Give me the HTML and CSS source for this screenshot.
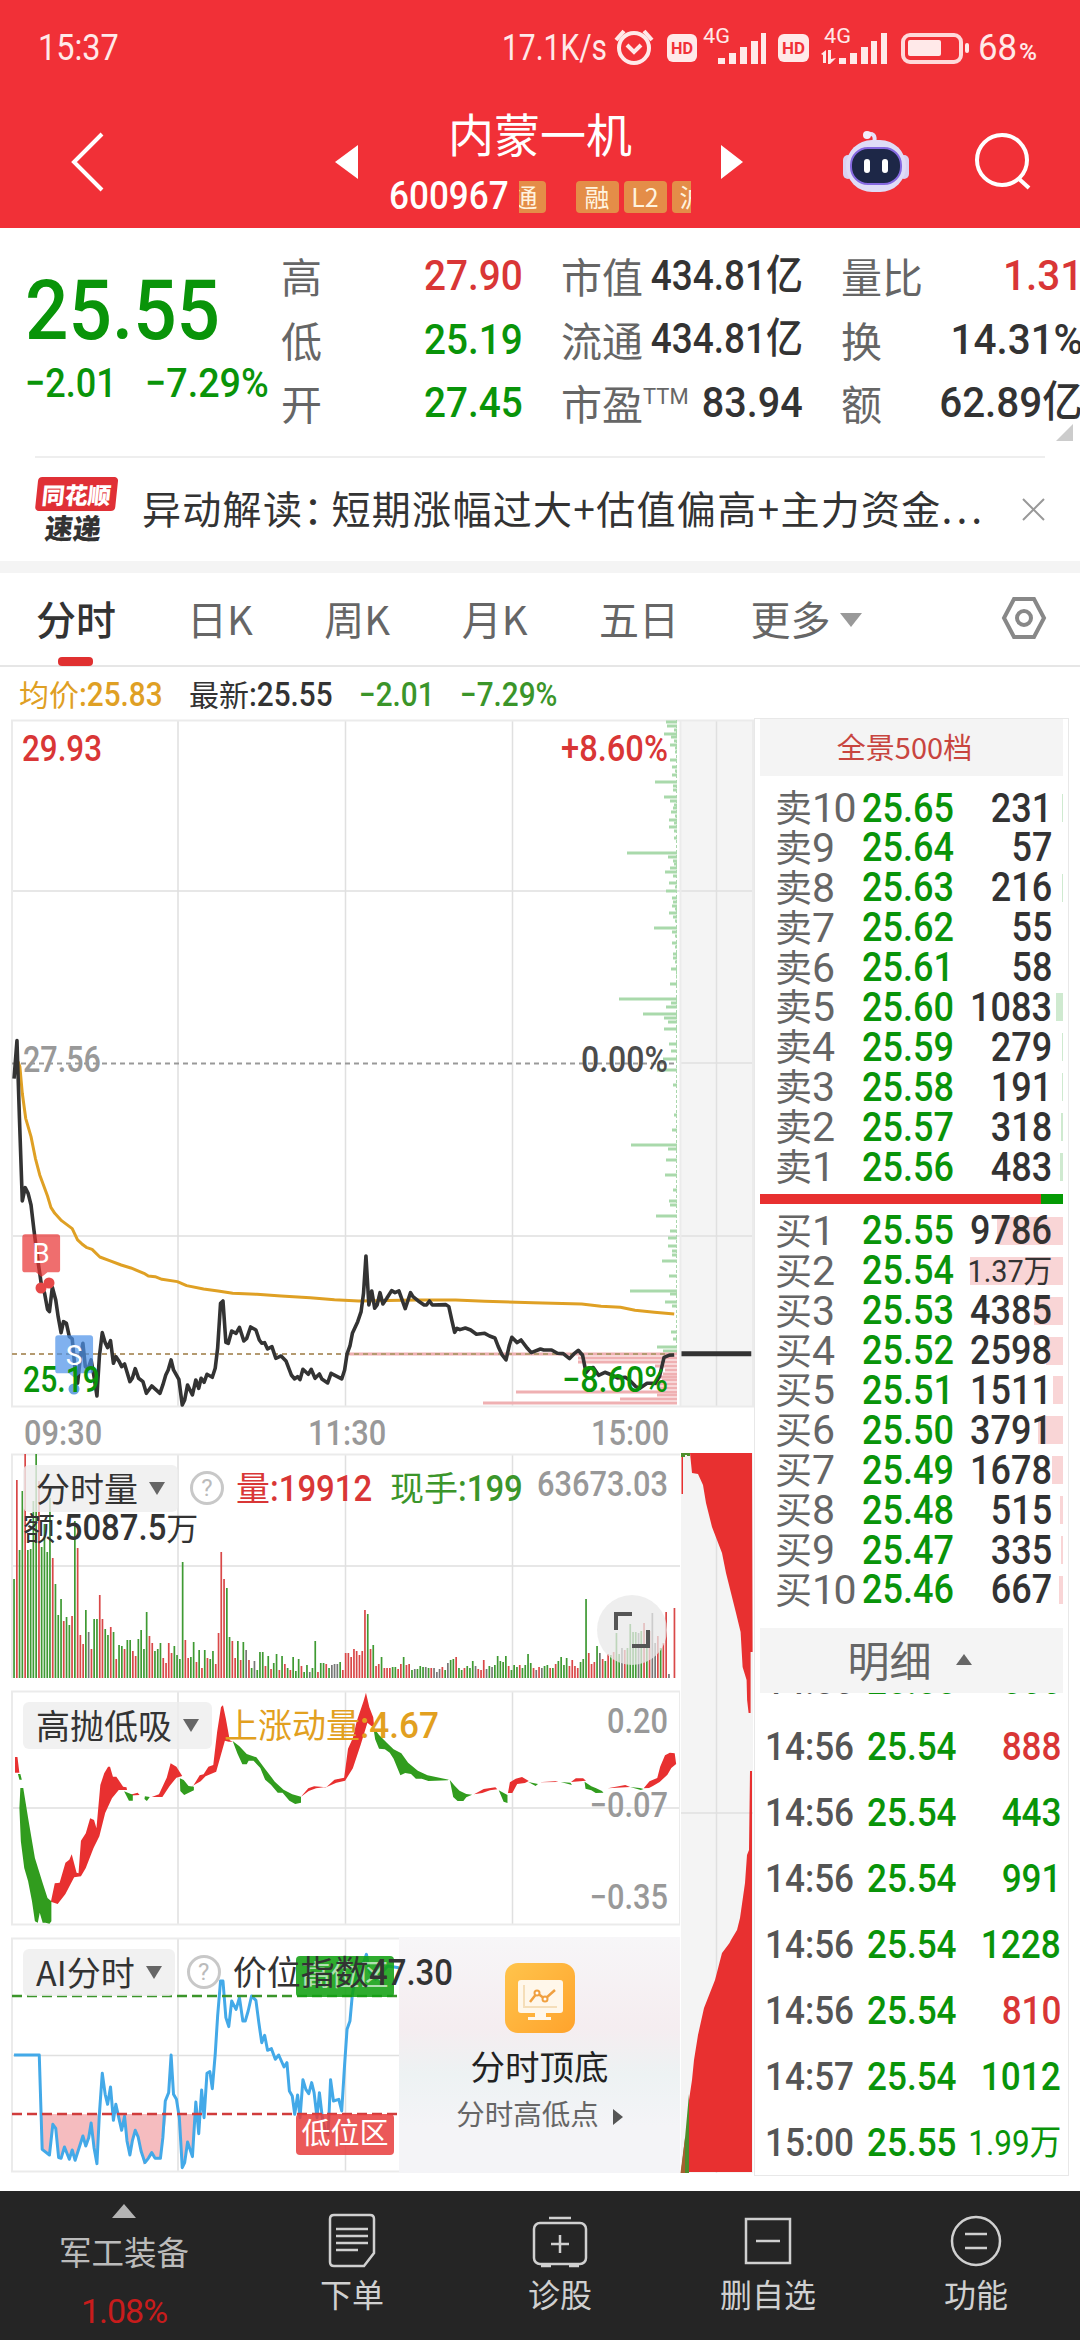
FILE: index.html
```html
<!DOCTYPE html>
<html lang="zh-CN">
<head>
    <meta charset="UTF-8">
    <meta name="viewport" content="width=device-width, initial-scale=1.0">
    <title>内蒙一机 600967</title>
    <link rel="stylesheet" href="styles.css">
</head>
<body>
    <div class="status-bar">
        <span class="num">15:37</span>
        <svg class="status-icons" width="580" height="60" viewBox="0 0 580 60">
            <text x="2" y="42" font-size="36" textLength="105" lengthAdjust="spacingAndGlyphs">17.1K/s</text>
            <g fill="none" stroke="#ffe9e9" stroke-width="4">
                <circle cx="134" cy="30" r="15"/>
                <path d="M116 22l8-9M152 22l-8-9M127 27l7 7 7-7"/>
            </g>
            <rect x="167" y="16" width="30" height="28" rx="6"/>
            <text class="hd" x="171" y="36" font-size="17" textLength="22" lengthAdjust="spacingAndGlyphs">HD</text>
            <text x="203" y="25" font-size="20" textLength="27" lengthAdjust="spacingAndGlyphs">4G</text>
            <path d="M218 46v-6h7v6zM229 46V35h7v11zM240 46V29h7v17zM251 46V23h7v23zM261 46V15h5v31z"/>
            <rect x="278" y="16" width="31" height="28" rx="6"/>
            <text class="hd" x="282" y="36" font-size="17" textLength="23" lengthAdjust="spacingAndGlyphs">HD</text>
            <text x="324" y="25" font-size="20" textLength="27" lengthAdjust="spacingAndGlyphs">4G</text>
            <path d="M321 36l5-4v13h-3v-8zM328 32h3v9l5-1-6 6h-2zM339 46v-6h7v6zM350 46V35h7v11zM361 46V29h7v17zM371 46V23h6v23zM381 46V15h6v31z"/>
            <rect x="403" y="17" width="58" height="27" rx="7" fill="none" stroke="#ffd9da" stroke-width="4"/>
            <rect x="408" y="22" width="33" height="16" rx="2"/>
            <rect x="465" y="25" width="4" height="10" rx="2"/>
            <text x="478" y="42" font-size="36" textLength="39" lengthAdjust="spacingAndGlyphs">68</text>
            <text x="519" y="42" font-size="23" font-weight="500" textLength="18" lengthAdjust="spacingAndGlyphs">%</text>
        </svg>
    </div>

    <div class="title-bar">
        <svg class="back" width="40" height="66" viewBox="0 0 40 66"><path d="M34 5L6 33l28 28"/></svg>
        <svg class="prev" width="24" height="34" viewBox="0 0 24 34"><path d="M23 0v34L0 17z"/></svg>
        <div class="stock">
            <h1>内蒙一机</h1>
            <div class="code">
                <span class="num">600967</span>
                <span class="tag cut-left">通</span>
                <span class="tag">融</span>
                <span class="tag">L2</span>
                <span class="tag cut-right">沪</span>
            </div>
        </div>
        <svg class="next" width="24" height="34" viewBox="0 0 24 34"><path d="M0 0v34l22-17z"/></svg>
        <svg class="robot" width="68" height="66" viewBox="0 0 68 66">
            <path d="M32 14c2-8-1-10-7-9" fill="none" stroke="#e6e0fa" stroke-width="4" stroke-linecap="round"/>
            <circle cx="25" cy="6" r="4" fill="#f3eefc"/>
            <rect x="1" y="26" width="10" height="24" rx="5" fill="#d9d2f2"/>
            <rect x="57" y="26" width="10" height="24" rx="5" fill="#d9d2f2"/>
            <rect x="4" y="11" width="60" height="52" rx="26" fill="#dfdcf7"/>
            <rect x="9" y="19" width="50" height="36" rx="17" fill="#1d2747" stroke="#8569e0" stroke-width="2"/>
            <rect x="22" y="30" width="6" height="14" rx="3" fill="#fff"/>
            <rect x="40" y="30" width="6" height="14" rx="3" fill="#fff"/>
        </svg>
        <svg class="search" width="60" height="60" viewBox="0 0 60 60"><circle cx="28" cy="28" r="25"/><path d="M44 46l11 10"/></svg>
    </div>

    <div class="quote">
        <div class="price">
            <b class="num">25.55</b>
            <p><span class="num">−2.01</span><span class="num pct">−7.29%</span></p>
        </div>
        <dl class="q1">
            <dt>高</dt><dd class="num up">27.90</dd>
            <dt>低</dt><dd class="num down">25.19</dd>
            <dt>开</dt><dd class="num down">27.45</dd>
        </dl>
        <dl class="q2">
            <dt>市值</dt><dd class="num">434.81亿</dd>
            <dt>流通</dt><dd class="num">434.81亿</dd>
            <dt>市盈<sup>TTM</sup></dt><dd class="num pe">83.94</dd>
        </dl>
        <dl class="q3">
            <dt>量比</dt><dd class="num up">1.31</dd>
            <dt>换</dt><dd class="num">14.31%</dd>
            <dt>额</dt><dd class="num">62.89亿</dd>
        </dl>
        <i class="corner"></i>
    </div>

    <div class="news">
        <div class="logo"><b>同花顺</b><i>速递</i></div>
        <span class="headline">异动解读<i>：</i>短期涨幅过大+估值偏高+主力资金<em>...</em></span>
        <svg width="24" height="24" viewBox="0 0 24 24"><path d="M1 1l21 21M22 1L1 22"/></svg>
    </div>

    <div class="tabs">
        <a class="active">分时</a>
        <a>日K</a>
        <a>周K</a>
        <a>月K</a>
        <a>五日</a>
        <a>更多<i class="caret"></i></a>
        <svg width="46" height="46" viewBox="0 0 46 46"><path d="M13 4h20l10 19-10 19H13L3 23z"/><circle cx="23" cy="23" r="7"/></svg>
    </div>

    <div class="main">
        <div class="left">
            <div class="legend">
                <span class="avg">均价<span class="num">:25.83</span></span>
                <span>最新<span class="num">:25.55</span></span>
                <span class="num down2">−2.01</span>
                <span class="num down2">−7.29%</span>
            </div>

            <svg class="chart" id="minute" width="754" height="690" viewBox="0 719 754 690">
                <rect x="680" y="720" width="73" height="687" fill="#f4f4f4"/>
                <g class="grid">
                    <path d="M178 720v687M345.500 720v687M512.500 720v687M716.500 720v687M12 891h740M680 1063h72M12 1236h740"/>
                    <path class="frame" d="M12 720.500h741v686H12zM680.500 720v687"/>
                </g>
                <path class="zero" d="M12 1063.500h665"/>
                <g id="depth"></g>
                <path class="last" d="M12 1354h665"/>
                <g transform="translate(0 1000) scale(.4847 .3333)">
                    <polyline class="avg-line" points="37,185 41,200 46,280 53,355 64,410 73,475 82,525 98,588 105,622 113,640 127,662 149,686 160,720 169,732 178,742 190,748 206,771 226,782 250,795 270,804 297,820 306,828 320,830 334,838 366,845 385,857 420,867 450,873 480,880 530,883 580,888 640,893 690,899 740,903 860,900 940,900 1000,904 1100,908 1200,912 1240,919 1280,922 1310,931 1350,937 1391,942"/>
                    <polyline class="price-line" points="29,236 35,122 40,350 46,603 52,563 58,580 64,615 70,690 74,735 80,800 86,860 92,880 98,928 102,935 108,862 115,900 120,950 126,998 131,965 137,970 143,1010 149,1017 155,1110 160,1150 166,1070 171,1030 176,1100 182,1105 188,1080 194,1130 200,1188 205,1070 211,998 217,1028 222,1043 228,1022 234,1090 239,1070 246,1085 251,1100 257,1092 268,1145 273,1135 279,1106 286,1135 295,1145 302,1180 313,1158 330,1180 336,1155 342,1125 347,1110 353,1080 358,1110 369,1138 376,1215 381,1200 387,1155 397,1185 404,1140 410,1165 415,1135 421,1147 427,1123 438,1132 444,1105 449,1045 455,910 460,903 466,1027 471,1030 478,993 487,1000 494,982 503,1023 509,1015 517,981 528,990 535,1020 540,1030 546,1028 552,1047 561,1040 569,1075 580,1068 590,1083 601,1125 608,1137 614,1130 619,1139 625,1108 636,1123 642,1108 650,1135 659,1122 664,1137 676,1149 683,1120 705,1137 711,1110 716,1062 722,1038 727,1000 738,965 745,935 750,880 755,768 761,915 767,873 773,925 778,915 784,878 790,912 798,895 808,872 815,878 823,873 836,926 847,878 852,890 863,903 875,915 880,915 886,903 892,915 920,914 926,920 932,960 938,997 943,985 949,989 960,984 971,990 983,1003 1000,1000 1010,1008 1021,1014 1028,1040 1036,1065 1044,1080 1051,1035 1056,1012 1067,1028 1075,1020 1088,1045 1096,1058 1115,1047 1122,1050 1138,1050 1150,1060 1162,1061 1175,1076 1184,1062 1193,1051 1202,1066 1209,1118 1216,1105 1224,1103 1235,1126 1248,1117 1262,1125 1274,1134 1290,1132 1300,1142 1311,1159 1320,1165 1335,1150 1352,1150 1361,1128 1370,1072 1380,1066 1391,1065"/>
                    <path d="M46 712q0-9 6-9h66q6 0 6 9v98q0 7-6 7H98l-12 14-12-14H52q-6 0-6-7z" fill="#e83030" opacity=".7"/>
                    <path d="M114 1015q0-9 6-9h66q6 0 6 9v98q0 7-6 7h-20l-12 14-12-14h-22q-6 0-6-7z" fill="#4a90e8" opacity=".7"/>
                    <path class="axis-end" d="M1406 1061h144"/>
                </g>
                <circle cx="41" cy="1288" r="5.500" fill="#e64848"/><circle cx="49" cy="1283" r="5.500" fill="#e64848"/>
                <circle cx="74" cy="1389" r="5.500" fill="#6ba5e2"/>
                <text class="mark" x="41" y="1263" text-anchor="middle">B</text>
                <text class="mark" x="74" y="1365" text-anchor="middle">S</text>
                <text x="22" y="761" textLength="80" lengthAdjust="spacingAndGlyphs" class="up">29.93</text>
                <text x="561" y="761" textLength="107" lengthAdjust="spacingAndGlyphs" class="up">+8.60%</text>
                <text x="23" y="1072" textLength="78" lengthAdjust="spacingAndGlyphs" class="muted">27.56</text>
                <text x="581" y="1072" textLength="87" lengthAdjust="spacingAndGlyphs" class="dark">0.00%</text>
                <text x="23" y="1392" textLength="77" lengthAdjust="spacingAndGlyphs" class="down">25.19</text>
                <text x="562" y="1392" textLength="106" lengthAdjust="spacingAndGlyphs" class="down">−8.60%</text>
            </svg>

            <div class="times">
                <span class="num">09:30</span><span class="num">11:30</span><span class="num">15:00</span>
            </div>

            <div class="lower">
                <div class="panels">
                    <div class="panel" id="volume">
                        <svg width="680" height="226" viewBox="0 1453 680 226">
                            <path class="grid" d="M178 1454v224M345.500 1454v224M512.500 1454v224M12 1566h668"/>
                            <path class="grid frame" d="M12 1678V1454.500h668"/>
                            <g id="bars"></g>
                        </svg>
                        <div class="expand"><svg width="36" height="36" viewBox="0 0 36 36"><path d="M2 18V2h16M34 18v16H18"/></svg></div>
                        <div class="labels">
                            <span class="chip">分时量<i class="caret"></i></span>
                            <span class="help">?</span>
                            <span class="up vol">量<span class="num">:19912</span></span>
                            <span class="down2">现手<span class="num">:199</span></span>
                        </div>
                        <div class="amount">额<span class="num">:5087.5</span>万</div>
                        <div class="scale"><span class="num">63673.03</span></div>
                    </div>

                    <div class="panel" id="momentum">
                        <svg width="680" height="236" viewBox="0 1689 680 236">
                            <path class="grid" d="M178 1690v234M345.500 1690v234M512.500 1690v234M12 1807h668"/>
                            <path class="grid frame" d="M12 1690.500h668v233H12z"/>
                            <g transform="translate(0 1680) scale(.4847 .3333)" fill="#e83030">
                                <path d="M31 228h5l4 47h-9zM105 662l8-55 10-2 12-60 8-9 5-16 10 55 4 2 5-98 10-22 9-45 8 5 5 25 8-130 8-35 8-20 4 0 6 30 7 0 14 30 7 2 1 8-17 0-14 25-14 44-12 70-12 35-16 60-10 25-14 3-18 50-16 30zM261 344l23-9 4 7zM313 348l15-8 16-50 8-43 12 10 12 28-12 5-14 25-15 33zM397 318l15-35 8-3 10-23 10-5 8-100 8-74 4-5 6 40 8 65 6 4-8 0-8-3-9 47-9 46-22 14-10 15-17 14zM621 347l15-25 12-6 25 3 17-23 20-6 8-87 10-32 8-50 14-60 5-26 7 44 8 30 2 28-6-2-8-10-14 67-16 70-16 37-18 6-19 12-23 5-15 8zM978 340l20-16 24-5 4 6-15 3-16 8zM1048 336l4-32 12-11 13-5 14 12-8 6-16 3-10 27zM1111 304l41-4-6 3zM1178 303l10-11 15 0 6 7zM1254 322l36-10 10 6zM1328 322l12-21 16-10 6-34 10-34 10-8 10 2 3 32-10 12-8 20-16 22-14 12-8 6z"/>
                                <path fill="#319c1e" d="M37 279h5l3 17h-5zM42 321h6l10 90 14 120 16 75 10 45 8 10v60l-4 7-8-3-6 0-6-30-4 30-6-4-6-60-8-60-8-40-7-80-3-100zM256 331l18 10v18h-8zM299 346l10 2-6 12-5-6zM371 292l8 5 10 18 11 2v11l-20 14-8-12zM480 180l14 16 15 23 20 10 18 35 20 38 18 24 18 14 18 7v18l-12 4-12-10-14-24-10 0-14-24-12-15-10-35-14-22-10 0-4 11-9 0-10-32zM770 137l12 25 16 23 14 20 16 12 14 28 20 24 20 14 44 13-2 2-40 2-14-7-12 0-10-14-12-3-10 7-14-50-8-18-10-10-12-2-8-28zM928 297l10 17 10 15 14 10 12 2-12 8-6 11-12 0-9-12zM1029 328l18 14v24l-8-4zM1090 303l20 6-5 6zM1157 303l20 2 3 7zM1206 302l14 14 10 6 12 8 3 5-16 1-9-8-12-5zM1300 318l20 3 8 3-6 3z"/>
                            </g>
                        </svg>
                        <div class="labels">
                            <span class="chip">高抛低吸<i class="caret"></i></span>
                            <span class="rise">上涨动量<span class="num">:4.67</span></span>
                        </div>
                        <div class="scale"><span class="num">0.20</span><span class="num">−0.07</span><span class="num">−0.35</span></div>
                    </div>

                    <div class="panel" id="ai">
                        <svg width="399" height="236" viewBox="0 1936 399 236">
                            <path class="grid" d="M178 1937v234M345.500 1937v234M12 2054.500h387"/>
                            <path class="grid frame" d="M399 1937.500H12v233h387"/>
                            <g transform="translate(0 1920) scale(.4847 .3333)">
                                <path class="low-fill" d="M84 579l3 105 15 18 8-90 6 10 7 90 11-34 10 37 5-28 6 28 16-72 7 28 10-65 10 122 5-148zM246 579l5 48 6-42 10 115 12-72 7 18 10 85 18-28 18 10 6-70 6-64zM366 579l10 160 12-76 9 45 6-129z"/>
                                <polyline class="blue-line" points="29,402 81,402 87,685 102,702 109,610 115,622 121,710 126,712 133,678 143,715 149,687 155,718 171,645 177,675 183,650 188,606 194,680 200,728 205,580 211,457 217,520 222,550 228,498 234,598 239,550 245,590 251,628 257,586 262,660 268,702 273,660 279,628 285,648 291,690 299,725 306,712 313,695 320,712 331,712 336,650 341,540 348,515 353,402 358,520 364,535 370,590 376,740 381,725 387,663 397,707 404,543 410,638 416,507 421,590 427,457 433,452 438,503 444,400 449,285 455,180 460,180 466,290 472,317 478,240 487,265 494,230 501,300 506,300 512,270 519,225 528,238 534,305 540,365 546,343 552,388 560,383 568,415 575,402 586,438 592,425 597,510 603,525 608,580 614,522 619,590 625,476 631,505 637,518 643,485 648,515 654,590 659,515 665,590 671,630 677,640 682,476 688,540 699,535 705,570 711,430 716,325 722,300 727,220 733,170 740,140 750,125 756,100 762,150 775,175 800,135 823,140"/>
                            </g>
                            <path class="high" d="M12 1995h387"/>
                            <path class="low" d="M12 2113h387"/>
                        </svg>
                        <span class="zone zone-high">高位区</span>
                        <span class="zone zone-low">低位区</span>
                        <div class="labels">
                            <span class="chip">AI分时<i class="caret"></i></span>
                            <span class="help">?</span>
                            <span>价位指数<span class="num">47.30</span></span>
                        </div>
                        <div class="promo">
                            <svg width="70" height="70" viewBox="0 0 70 70">
                                <defs><linearGradient id="gold" x1="0" y1="0" x2="1" y2="1"><stop offset="0" stop-color="#ffc44c"/><stop offset="1" stop-color="#ffa32c"/></linearGradient></defs>
                                <rect width="70" height="70" rx="13" fill="url(#gold)"/>
                                <rect x="13" y="17" width="45" height="33" rx="3" fill="#fff7ea"/>
                                <path d="M30 50h11v4h5v3H23v-3h7z" fill="#fff7ea"/>
                                <path d="M19 22v22h33" fill="none" stroke="#f5deb9" stroke-width="2"/>
                                <path d="M25 39l7-9 8 6 10-9" fill="none" stroke="#f0a040" stroke-width="2.500"/>
                                <circle cx="32" cy="30" r="2.500" fill="#fff" stroke="#f0a040" stroke-width="2"/><circle cx="40" cy="36" r="2.500" fill="#fff" stroke="#f0a040" stroke-width="2"/>
                            </svg>
                            <b>分时顶底</b>
                            <span>分时高低点<i></i></span>
                        </div>
                    </div>
                </div>
                <svg class="profile" width="74" height="720" viewBox="680 1453 74 720">
                    <rect x="681" y="1453" width="72" height="720" fill="#f4f4f4"/>
                    <path class="grid" d="M716.500 1453v720M681 1813h72"/>
                    <path d="M752 1453H690l2 20 6 1 5 11 3 18 6 24 5 13 5 13 4 20 5 20 5 20 4.600 19 2 35 4 13 .5 20 1.500 13h2v-61h2z" fill="#e83030"/>
                    <path d="M752 1771h-2l-1 79-2 5-2 28-5 35-3 12-6 10-1.500 3-7.500 10-7 27-11 28-6 27-4 25-2 20-3 20v72h63z" fill="#e83030"/>
                    <path d="M689 2094v79h-8l4-35z" fill="#4f8d2b"/>
                    <path d="M685 2138v35h-4.500z" fill="#a66031"/>
                    <path d="M681 1453h9v3h-3v-1h-2v2h-4z" fill="#4f8d2b"/>
                    <path d="M681.500 1457h1.500v37h-1.500z" fill="#e83030"/>
                </svg>
            </div>
        </div>

        <div class="book">
            <div class="panorama">全景500档</div>
            <div class="rows" id="sell"></div>
            <div class="ratio"><i></i></div>
            <div class="rows" id="buy"></div>
            <div class="detail">明细<i></i></div>
            <div class="ticks" id="ticks"></div>
        </div>
    </div>

    <div class="nav">
        <a class="sector"><i></i><span>军工装备</span><em>1.08%</em></a>
        <a><svg width="56" height="56" viewBox="0 0 56 56"><path d="M10 2h36q4 0 4 4v34L40 53H10q-4 0-4-4V6q0-4 4-4z"/><path d="M12 16h32M12 23h32M12 30h32M12 37h22"/></svg><span>下单</span></a>
        <a><svg width="60" height="56" viewBox="0 0 60 56"><rect x="4" y="10" width="52" height="41" rx="6"/><path d="M19 5h22M30 22v18M21 31h18M11 53h10M39 53h10"/></svg><span>诊股</span></a>
        <a><svg width="56" height="56" viewBox="0 0 56 56"><rect x="6" y="6" width="44" height="44"/><path d="M16 28h24"/></svg><span>删自选</span></a>
        <a><svg width="56" height="56" viewBox="0 0 56 56"><circle cx="28" cy="28" r="24"/><path d="M17 21h22M17 35h22"/></svg><span>功能</span></a>
    </div>

    <script src="chart.js"></script>
</body>
</html>
```
FILE: styles.css
```css
* {
    box-sizing: border-box;
}

body {
    margin: 0;
    width: 1080px;
    height: 2340px;
    overflow: hidden;
    background-color: #fff;
    color: #333;
    font-family: "Noto Sans CJK SC", sans-serif;
    font-size: 32px;
    line-height: 1;
}

svg {
    display: block;
    flex: none;
}

i, em {
    font-style: normal;
}

p, h1, dl, dd {
    margin: 0;
}

/* narrow digits */
.num {
    display: inline-block;
    font-family: Roboto, "Noto Sans CJK SC", sans-serif;
    font-weight: 500;
    transform: scaleX(0.9);
    transform-origin: left center;
    white-space: nowrap;
}

.up {
    color: #d93636;
    fill: #d93636;
}

.down {
    color: #099409;
    fill: #099409;
}

.down2 {
    color: #3b952a;
}

.caret {
    display: inline-block;
    border: 8px solid transparent;
    border-top: 13px solid #666;
    border-bottom: 0;
}

/* status bar */
.status-bar {
    display: flex;
    align-items: center;
    justify-content: space-between;
    height: 96px;
    padding-left: 38px;
    background-color: #f13037;
    color: #ffe9e9;
    font-size: 36px;
}

.status-bar .num {
    font-weight: 400;
}

.status-icons {
    fill: #ffe9e9;
    font-family: Roboto, sans-serif;
}

.status-icons .hd {
    fill: #f13037;
    font-weight: 700;
}

/* title */
.title-bar {
    display: flex;
    align-items: center;
    height: 132px;
    background-color: #f13037;
    color: #fff;
}

.title-bar svg {
    fill: #fff;
}

.title-bar .back,
.title-bar .search {
    fill: none;
    stroke: #fff;
    stroke-width: 4;
}

.back {
    margin-left: 68px;
}

.prev {
    margin-left: 227px;
}

.stock {
    display: flex;
    flex-direction: column;
    align-items: center;
    width: 362px;
    height: 118px;
}

.stock h1 {
    margin-top: 5px;
    font-size: 46px;
    font-weight: 400;
    line-height: 48px;
}

.code {
    display: flex;
    gap: 5px;
    align-items: center;
    width: 303px;
    margin-top: 21px;
}

.code .num {
    width: 125px;
    font-size: 39px;
}

.tag {
    display: flex;
    align-items: center;
    justify-content: center;
    width: 43px;
    height: 32px;
    border-radius: 4px;
    background-color: #e48d48;
    color: #fff3df;
    font-size: 25px;
    overflow: hidden;
}

.cut-left {
    width: 27px;
    margin-right: 25px;
    justify-content: flex-end;
    padding-right: 8px;
    border-radius: 0 4px 4px 0;
}

.cut-right {
    width: 19px;
    justify-content: flex-start;
    padding-left: 8px;
    border-radius: 4px 0 0 4px;
}

.robot {
    margin-left: 97px;
}

.search {
    margin-left: 64px;
}

/* quote */
.quote {
    position: relative;
    display: grid;
    grid-template-columns: 218px 242px 242px 242px;
    column-gap: 38px;
    height: 228px;
    padding: 16px 0 0 25px;
}

.price {
    color: #099409;
}

.price b {
    margin-top: 25px;
    font-size: 84px;
    height: 84px;
    transform: scaleX(0.91);
}

.price p {
    display: flex;
    gap: 16px;
    margin-top: 10px;
    font-size: 41px;
    white-space: nowrap;
}

.price p .num {
    transform: scaleX(0.88);
}

.price p .pct {
    transform: scaleX(0.92);
}

.quote dl {
    display: grid;
    grid-template-columns: 82px minmax(0, 1fr);
    grid-auto-rows: 63.5px;
    align-items: center;
    font-size: 43px;
    white-space: nowrap;
}

.quote dt {
    color: #666;
    font-size: 41px;
}

.quote dt sup {
    font-family: Roboto, sans-serif;
    font-size: 22px;
    line-height: 0;
    vertical-align: 16px;
}

.quote dd {
    justify-self: end;
    transform-origin: right center;
}

.quote .q2 dd {
    font-size: 42px;
    transform: scaleX(0.88);
}

.quote .q2 .pe {
    font-size: 43px;
    transform: scaleX(0.92);
}

.quote .q3 dd {
    transform: scaleX(0.94);
}

.corner {
    position: absolute;
    right: 7px;
    bottom: 15px;
    border-left: 17px solid transparent;
    border-bottom: 17px solid #ccc;
}

/* news */
.news {
    display: flex;
    align-items: center;
    height: 105px;
    margin: 0 35px;
    border-top: 2px solid #eee;
}

.logo {
    width: 80px;
    text-align: center;
    font-weight: 900;
    transform: skewX(-6deg);
}

.logo b {
    display: block;
    height: 34px;
    border-radius: 4px;
    background-color: #e03036;
    color: #fff;
    font-size: 23px;
    line-height: 34px;
}

.logo i {
    display: block;
    margin-top: 1px;
    font-size: 28px;
    line-height: 30px;
}

.headline {
    flex: 1;
    margin: 0 0 5px 27px;
    font-size: 39px;
    letter-spacing: 1.3px;
    white-space: nowrap;
}

.headline i {
    margin-right: -12px;
}

.headline em {
    letter-spacing: 4px;
}

.news svg {
    margin-right: -1px;
    fill: none;
    stroke: #999;
    stroke-width: 2;
}

/* tabs */
.tabs {
    display: flex;
    align-items: center;
    height: 106px;
    padding: 0 33px 2px 36px;
    border-top: 12px solid #f4f4f4;
    border-bottom: 2px solid #e6e6e6;
    color: #666;
    font-size: 40px;
}

.tabs a {
    position: relative;
    margin-right: 71.5px;
    white-space: nowrap;
}

.tabs a.active {
    color: #333;
    font-weight: 500;
    margin-right: 71px;
}

.tabs a.active::after {
    content: "";
    position: absolute;
    left: 22px;
    bottom: -28px;
    width: 35px;
    height: 9px;
    border-radius: 4px;
    background-color: #e03030;
}

.tabs .caret {
    margin-left: 9px;
    border-width: 14px 11px 0;
    border-top-color: #999;
    vertical-align: 8px;
}

.tabs svg {
    margin-left: auto;
    fill: none;
    stroke: #888;
    stroke-width: 4;
}

/* main area */
.main {
    display: grid;
    grid-template-columns: 754px 315px;
    height: 1524px;
}

.legend {
    display: flex;
    gap: 17px;
    align-items: center;
    height: 52px;
    padding-left: 19px;
    padding-top: 2px;
    font-size: 30px;
    white-space: nowrap;
}

.legend .avg {
    color: #dfa024;
}

.legend .num {
    font-size: 33px;
}

.chart text {
    font-family: Roboto, sans-serif;
    font-size: 36px;
    font-weight: 500;
}

.chart .muted {
    fill: #999;
}

.chart .dark {
    fill: #4c4c4c;
}

.chart .mark {
    fill: #fff;
    font-size: 28px;
    font-weight: 400;
}

.grid {
    fill: none;
    stroke: #e0e0e0;
    stroke-width: 1.5;
}

.frame {
    stroke: #ebebeb;
    stroke-width: 2;
}

polyline,
.axis-end {
    fill: none;
    stroke-linejoin: round;
    vector-effect: non-scaling-stroke;
}

.price-line {
    stroke: #333;
    stroke-width: 3.6;
}

.avg-line {
    stroke: #dfa024;
    stroke-width: 3;
}

.axis-end {
    stroke: #333;
    stroke-width: 5;
}

.zero,
.last {
    stroke: #999;
    stroke-width: 2;
    stroke-dasharray: 5 4;
}

.last {
    stroke: #b49a70;
}

.times {
    display: flex;
    justify-content: space-between;
    align-items: center;
    height: 44px;
    padding: 5px 74px 0 24px;
    color: #999;
    font-size: 35px;
}

.times .num {
    transform: scaleX(0.88);
}

.lower {
    display: flex;
    width: 754px;
}

.panels {
    display: flex;
    flex-direction: column;
    gap: 11px;
    width: 680px;
}

.panel {
    position: relative;
    font-size: 34px;
}

.labels {
    position: absolute;
    left: 23px;
    top: 11px;
    display: flex;
    align-items: center;
    height: 48px;
    white-space: nowrap;
}

.labels > span {
    margin-right: 12px;
}

.labels .vol {
    margin-right: 5px;
}

.labels .num,
.amount .num {
    font-size: 37px;
    line-height: 34px;
    transform: scaleX(0.89);
}

.labels .chip {
    display: flex;
    align-items: center;
    height: 47px;
    padding: 0 13px 0 13px;
    border-radius: 6px;
    background-color: rgba(238, 238, 238, 0.8);
}

.chip .caret {
    margin-left: 11px;
}

.help {
    width: 34px;
    height: 34px;
    border: 3px solid #c8c8c8;
    border-radius: 50%;
    color: #bbb;
    font-family: Roboto, sans-serif;
    font-size: 24px;
    line-height: 28px;
    text-align: center;
}

.rise {
    color: #e2a01f;
}

.labels .rise .num {
    transform: scaleX(0.95);
}

.amount {
    position: absolute;
    left: 23px;
    top: 57px;
    font-size: 32px;
    white-space: nowrap;
}

.amount .num {
    margin-right: -14px;
}

.scale {
    position: absolute;
    right: 12px;
    top: 14px;
    color: #999;
    font-size: 35px;
}

.scale .num {
    display: block;
    text-align: right;
    transform: scaleX(0.88);
    transform-origin: right center;
}

#momentum .scale .num + .num {
    margin-top: 49px;
}

#momentum .scale .num:last-child {
    margin-top: 57px;
}

.expand {
    position: absolute;
    left: 597px;
    top: 142px;
    width: 70px;
    height: 70px;
    padding: 17px;
    border-radius: 50%;
    background-color: rgba(232, 232, 232, 0.75);
}

.expand path {
    fill: none;
    stroke: #555;
    stroke-width: 4;
}

.low-fill {
    fill: #f5bcbf;
}

.blue-line {
    stroke: #43a9e8;
    stroke-width: 3;
}

.high,
.low {
    stroke: #3b952a;
    stroke-width: 2.5;
    stroke-dasharray: 10 5;
}

.low {
    stroke: #d03c3c;
}

.zone {
    position: absolute;
    left: 296px;
    top: 19px;
    width: 98px;
    height: 41px;
    border-radius: 4px;
    background-color: rgba(18, 160, 18, 0.88);
    color: rgba(255, 255, 255, 0.65);
    font-size: 29px;
    line-height: 34px;
    text-align: center;
}

.zone-low {
    top: 177px;
    background-color: rgba(232, 60, 60, 0.85);
    color: #fff;
}

.promo {
    position: absolute;
    left: 399px;
    top: 0;
    z-index: -1;
    display: flex;
    flex-direction: column;
    align-items: center;
    width: 281px;
    height: 236px;
    padding-top: 26px;
    background: linear-gradient(#f7f6f8, #f5edf0 38%, #edf2f3 58%, #f4f4f7 80%);
    color: #222;
}

.promo b {
    margin-top: 15px;
    font-size: 34.5px;
    font-weight: 400;
}

.promo span {
    margin-top: 16px;
    color: #666;
    font-size: 28.5px;
}

.promo i {
    display: inline-block;
    margin-left: 14px;
    border: 8px solid transparent;
    border-left: 10px solid #555;
    border-right: 0;
}

/* order book */
.book {
    height: 1458px;
    margin-top: 51px;
    padding: 0 5px;
    border: 1px solid #e8e8e8;
    overflow: hidden;
}

.panorama {
    height: 57px;
    padding-right: 14px;
    background-color: #f4f4f4;
    color: #c8453f;
    font-size: 29px;
    line-height: 55px;
    text-align: center;
}

.rows {
    padding-top: 12px;
}

.row {
    display: grid;
    grid-template-columns: 87px minmax(0, 1fr) 80px;
    align-items: center;
    height: 39.9px;
    padding: 0 11px 0 15px;
    background-repeat: no-repeat;
    background-position: right center;
    font-size: 40px;
    white-space: nowrap;
}

.row .name {
    color: #666;
    font-size: 37px;
}

.row .name span {
    font-family: Roboto, sans-serif;
    font-size: 41px;
    letter-spacing: -1.5px;
}

.row .num:last-child,
.tick .num:last-child {
    justify-self: end;
    transform-origin: right center;
}

.row .small {
    font-size: 32px;
    font-weight: 400;
    line-height: 40px;
}

#sell .row {
    background-image: linear-gradient(#cfead0, #cfead0);
}

#buy .row {
    background-image: linear-gradient(#f9d5d6, #f9d5d6);
}

.ratio {
    height: 10px;
    margin-top: 7px;
    background-color: #059a05;
}

.ratio i {
    display: block;
    width: 281px;
    height: 10px;
    background-color: #e83030;
}

#buy {
    padding-top: 7px;
}

.detail {
    display: flex;
    align-items: center;
    justify-content: center;
    height: 65px;
    margin-top: 18px;
    padding: 0 4px 2px 0;
    background-color: #f4f4f4;
    color: #666;
    font-size: 42px;
}

.detail i {
    margin-left: 24px;
    border: 8px solid transparent;
    border-bottom: 11px solid #666;
    border-top: 0;
}

.ticks {
    display: flex;
    flex-direction: column;
    justify-content: flex-end;
    height: 484px;
    overflow: hidden;
}

.tick {
    display: grid;
    flex: none;
    grid-template-columns: 102px minmax(0, 1fr) 80px;
    align-items: center;
    height: 66px;
    padding: 0 2px 0 5px;
    font-size: 39px;
}

.tick .num:first-child {
    color: #555;
}

.tick .small {
    font-size: 35px;
    font-weight: 400;
}

/* bottom nav */
.nav {
    display: grid;
    grid-template-columns: 248px repeat(4, 208px);
    height: 149px;
    background-color: #252525;
    color: #d0d0d0;
}

.nav a {
    display: flex;
    flex-direction: column;
    align-items: center;
    padding-top: 22px;
    font-size: 32px;
}

.nav a span {
    margin-top: 8px;
}

.nav svg {
    fill: none;
    stroke: #d0d0d0;
    stroke-width: 2.5;
}

.nav .sector {
    padding-top: 13px;
    color: #bbb;
}

.sector i {
    border: 12px solid transparent;
    border-bottom: 14px solid #b4b4b4;
    border-top: 0;
}

.nav .sector span {
    margin-top: 17px;
    font-size: 32.5px;
}

.sector em {
    margin-top: 26px;
    color: #c81c1c;
    font-family: Roboto, sans-serif;
    font-size: 34px;
    letter-spacing: -1px;
}
```
FILE: chart.js
```javascript
// Order book: name, price, volume, bar width
const sell = [
    ['10', '25.65', '231', 1], ['9', '25.64', '57', 0], ['8', '25.63', '216', 1], ['7', '25.62', '55', 0],
    ['6', '25.61', '58', 0], ['5', '25.60', '1083', 7], ['4', '25.59', '279', 1], ['3', '25.58', '191', 1],
    ['2', '25.57', '318', 2], ['1', '25.56', '483', 3]
];
const buy = [
    ['1', '25.55', '9786', 66], ['2', '25.54', '1.37万', 93], ['3', '25.53', '4385', 29], ['4', '25.52', '2598', 17],
    ['5', '25.51', '1511', 10], ['6', '25.50', '3791', 25], ['7', '25.49', '1678', 11], ['8', '25.48', '515', 3],
    ['9', '25.47', '335', 2], ['10', '25.46', '667', 4]
];

function bookRow(side, r) {
    const small = r[2].includes('万') ? ' small' : '';
    return `<div class="row" style="background-size:${r[3]}px 28px"><span class="name">${side}<span>${r[0]}</span></span>` +
        `<span class="num down">${r[1]}</span><span class="num${small}">${r[2]}</span></div>`;
}
document.getElementById('sell').innerHTML = sell.map(r => bookRow('卖', r)).join('');
document.getElementById('buy').innerHTML = buy.map(r => bookRow('买', r)).join('');

// Tick list
const ticks = [
    ['14:56', '25.55', '566', 'down'], ['14:56', '25.54', '888', 'up'], ['14:56', '25.54', '443', 'down'],
    ['14:56', '25.54', '991', 'down'], ['14:56', '25.54', '1228', 'down'], ['14:56', '25.54', '810', 'up'],
    ['14:57', '25.54', '1012', 'down'], ['15:00', '25.55', '1.99万', 'down']
];
document.getElementById('ticks').innerHTML = ticks.map(t =>
    `<div class="tick"><span class="num">${t[0]}</span><span class="num down">${t[1]}</span>` +
    `<span class="num ${t[3]}${t[2].includes('万') ? ' small' : ''}">${t[2]}</span></div>`).join('');

// Volume bars: height + colour, one per minute
const colors = { r: '#d94848', g: '#3f9a33', k: '#777' };
const volumes = ('99g 198r 128g 187g 224r 128g 129g 177g 224g 197r 131g 154g 126g 180g 120r 94g 63g 79g 57r 61g 53g 62r 157g 130r 43r 34r 68g 46k 29r 59g 59g 83r 59r 49g 43g 51r 46g 19r 33g 32g ' +
    '29r 38g 38g 27r 22r 39g 48g 29g 66g 42r 35r 27g 29g 35g 20r 15r 35r 25r 32g 23g 19g 116g 38r 20r 21g 36g 16r 28g 10r 28g 20r 19g 27g 14r 45r 126r 99r 90g 41g 37r ' +
    '20r 37g 18r 36g 28k 18r 10g 17k 8g 26g 26g 12r 22g 9r 15g 24g 8r 22g 14r 10g 8r 21g 7g 19g 12r 6g 13g 6k 10g 37g 6r 15g 15g 14r 10g 13k 14k 14k 16g 8r ' +
    '25r 25r 21r 29r 27r 23r 27r 68r 64g 29r 33g 12r 14r 21g 10r 10r 10r 11g 11g 9r 14r 21g 13r 14r 8g 9k 9g 12g 11g 11k 10g 10r 10k 6k 9k 11r 8g 15k 18g 19g ' +
    '21r 10g 8g 10r 12g 10g 17g 12k 9r 8r 18r 9k 12g 11k 13g 22g 17g 16g 22g 12r 8g 13g 11g 13r 10g 13g 24g 15g 10r 8k 11r 10k 12g 13g 10r 10g 14r 17g 21g 13g ' +
    '20g 12r 18r 12r 10r 16g 19g 79g 25r 14r 16r 32g 25k 19r 17g 24r 23g 26r 45g 24g 30k 28r 30g 54g 46g 46g 45k 47g 55r 38g 47r 65k 35k 42r 30g 35r 66r 4k 0k 70r').split(' ');
document.getElementById('bars').innerHTML = volumes.map((v, i) => {
    const h = parseInt(v);
    const x = 13.2 + i * 660.4 / (volumes.length - 1);
    return `<rect x="${x.toFixed(1)}" y="${1678 - h}" width="1.7" height="${h}" fill="${colors[v.slice(-1)]}"/>`;
}).join('');

// Depth lines on the right edge of the minute chart: [y, length]
const asks = [
    [722, 11], [726, 10], [730, 3], [734, 13], [737, 6], [741, 3], [745, 7], [748, 2], [752, 2], [760, 7], [767, 5], [771, 2],
    [775, 5], [782, 22], [786, 4], [790, 4], [797, 13], [801, 7], [805, 3], [808, 4], [812, 6], [816, 2], [820, 8], [823, 3],
    [827, 8], [831, 3], [838, 3], [853, 50], [857, 9], [861, 4], [864, 3], [868, 7], [872, 12], [876, 4], [883, 8], [887, 2],
    [891, 11], [898, 5], [902, 4], [906, 5], [909, 2], [913, 8], [917, 4], [921, 2], [928, 23], [932, 5], [936, 2], [943, 5],
    [947, 2], [954, 4], [958, 4], [962, 2], [969, 6], [973, 1], [977, 1], [984, 7], [999, 58], [1003, 6], [1007, 11], [1014, 34],
    [1018, 13], [1022, 9], [1029, 13], [1044, 8], [1051, 6], [1059, 14], [1070, 20], [1085, 4], [1115, 3], [1130, 5],
    [1145, 46], [1149, 9], [1160, 11], [1175, 12], [1190, 4], [1201, 8], [1205, 7], [1216, 21], [1231, 7], [1238, 9], [1246, 9],
    [1251, 5], [1255, 5], [1261, 15], [1276, 8], [1291, 47], [1294, 7], [1302, 12], [1306, 5], [1332, 6], [1339, 4], [1347, 20], [1351, 14]
];
const bids = [
    [1354, 329], [1358, 99], [1362, 99], [1366, 22], [1370, 12], [1374, 14], [1377, 20], [1380, 15], [1384, 24], [1388, 18],
    [1392, 161], [1395, 20], [1399, 57], [1403, 194]
];
const line = (d, c) => `<rect x="${677 - d[1]}" y="${d[0] - 1.5}" width="${d[1]}" height="3" fill="${c}"/>`;
document.getElementById('depth').innerHTML =
    '<path d="M676.500 720v634" stroke="#a9d6ab" stroke-dasharray="3 2"/>' +
    asks.map(d => line(d, '#a9d9ab')).join('') + bids.map(d => line(d, '#efb0b2')).join('');
```
